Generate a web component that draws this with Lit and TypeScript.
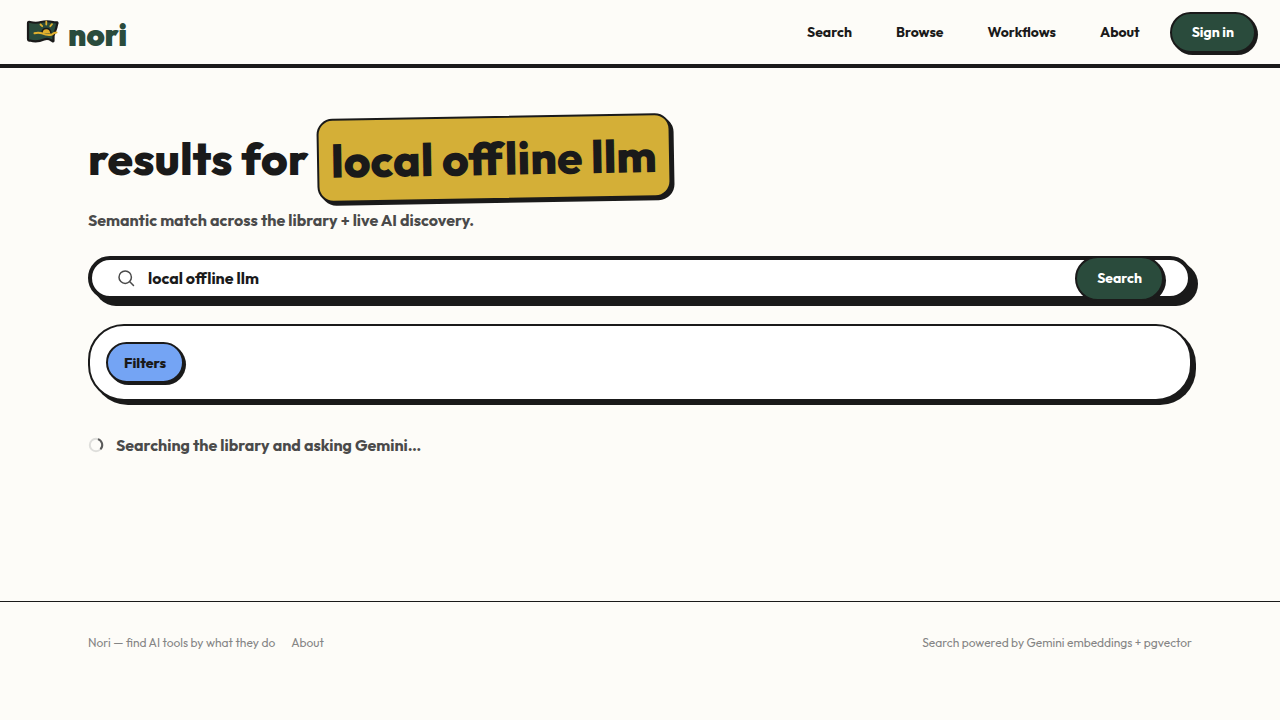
import { LitElement, html, css } from "lit";
import { customElement, state } from "lit/decorators.js";

@customElement("app-root")
export class AppRoot extends LitElement {
  static styles = css`
    :host {
      --ink: #1a1a1a;
      --paper: #fdfcf8;
      --green: #2a4b3c;
      --gold: #d4af37;
      --blue: #74a4f4;
      --muted: #4a4a4a;
      display: flex;
      flex-direction: column;
      min-height: 100vh;
      background: var(--paper);
      color: var(--ink);
      font-family: Outfit, Lato, "Open Sans", sans-serif;
      font-size: 16px;
      line-height: 24px;
    }
    *, *::before, *::after { box-sizing: border-box; }
    a { color: inherit; text-decoration: none; }
    .header {
      display: flex;
      align-items: center;
      justify-content: space-between;
      height: 68px;
      padding: 0 24px;
      border-bottom: 4px solid var(--ink);
    }
    .brand {
      display: flex;
      align-items: center;
      gap: 8px;
      color: var(--green);
      font-size: 31px;
      font-weight: 900;
      line-height: 40px;
    }
    .wordmark { padding-top: 6px; }
    .flag { width: 36px; height: 36px; }
    .nav { display: flex; align-items: center; gap: 16px; font-size: 14px; font-weight: 700; }
    .nav a { padding: 8px 14px; }
    .btn {
      height: 41px;
      padding: 0 20px;
      border: 2px solid var(--ink);
      border-radius: 24px;
      background: var(--green);
      box-shadow: 2px 2px 0 var(--ink);
      color: #fff;
      font: inherit;
      font-size: 14px;
      font-weight: 700;
      cursor: pointer;
    }
    .main {
      flex: 1;
      width: 100%;
      padding: 48px 88px;
    }
    h1 { margin: 0 0 8px; font-size: 46px; font-weight: 800; line-height: 60px; }
    .term {
      display: inline-block;
      padding: 10px 12px;
      border: 2px solid var(--ink);
      border-radius: 16px;
      background: var(--gold);
      box-shadow: 3px 3px 0 var(--ink);
      transform: rotate(-1deg);
    }
    .lead { margin: 0 0 24px; font-weight: 700; color: var(--muted); }
    .search {
      display: flex;
      align-items: center;
      gap: 12px;
      height: 44px;
      padding: 0 24px;
      border: 4px solid var(--ink);
      border-radius: 24px;
      background: #fff;
      box-shadow: 6px 6px 0 var(--ink);
    }
    .search-btn { height: 45px; }
    .glass { flex: none; width: 20px; height: 20px; color: var(--muted); }
    .field {
      flex: 1;
      min-width: 0;
      padding: 0;
      border: 0;
      outline: 0;
      background: none;
      color: inherit;
      font: inherit;
      font-weight: 700;
    }
    .filters {
      display: flex;
      margin-top: 24px;
      padding: 16px;
      border: 2px solid var(--ink);
      border-radius: 36px;
      background: #fff;
      box-shadow: 4px 4px 0 var(--ink);
    }
    .filter-btn { padding: 0 16px; background: var(--blue); color: var(--ink); font-weight: 800; }
    .status {
      display: flex;
      align-items: center;
      gap: 12px;
      margin-top: 32px;
      color: var(--muted);
      font-weight: 700;
    }
    .spinner { width: 16px; height: 16px; }
    .footer {
      display: flex;
      justify-content: space-between;
      height: 119px;
      padding: 32px 88px;
      border-top: 1px solid var(--ink);
      color: #858585;
      font-size: 12px;
      line-height: 18px;
    }
    .footer div { display: flex; gap: 16px; }
  `;

  @state() private query = "local offline llm";

  render() {
    return html`
      <header class="header">
        <a class="brand" href="#">
          <svg class="flag" viewBox="0 0 36 36" aria-hidden="true">
            <path d="M4 9Q4 7.700 6 8Q12 9.500 17 8Q23 6.500 29 8Q31 8.500 33 8.300Q34 8.800 33 10.500Q32.500 14 31 17.500Q29 21 29.500 27Q29 28 27.500 26.500Q24 24 20 25.500Q13 28.500 6 26.500Q4 27 4 25Z" fill="#2a4b3c" stroke="#1a1a1a" stroke-width="2.200" stroke-linejoin="round"/>
            <path d="M17.800 19.500Q18 14.500 22.300 14.500Q26.600 14.500 27 19.500" fill="#e0b02e" stroke="#1a1a1a" stroke-width="1.500"/>
            <path d="M10.500 19.300Q14 18 18 19.300Q24 22 28 20.500Q30 18.500 32.500 18.500" fill="none" stroke="#e0b02e" stroke-width="2" stroke-linecap="round"/>
            <path d="M16.500 10.500l1.700 1.700M22.300 7.500v3M28 10.200l-1.700 2" stroke="#e0b02e" stroke-width="1.800" stroke-linecap="round"/>
          </svg>
          <span class="wordmark">nori</span>
        </a>
        <nav class="nav">
          <a href="#search">Search</a>
          <a href="#browse">Browse</a>
          <a href="#workflows">Workflows</a>
          <a href="#about">About</a>
          <button class="btn" type="button">Sign in</button>
        </nav>
      </header>
      <main class="main">
        <h1>results for <span class="term">${this.query}</span></h1>
        <p class="lead">Semantic match across the library + live AI discovery.</p>
        <form class="search" @submit=${(e: Event) => e.preventDefault()}>
          <svg class="glass" viewBox="0 0 20 20" fill="none" stroke="currentColor" stroke-width="1.500" stroke-linecap="round" aria-hidden="true">
            <circle cx="9.200" cy="9.200" r="6.200"/><path d="M13.800 13.800L17.500 17.500"/>
          </svg>
          <input class="field" type="text" aria-label="Search tools" .value=${this.query}>
          <button class="btn search-btn" type="submit">Search</button>
        </form>
        <section class="filters" aria-label="Filters">
          <button class="btn filter-btn" type="button">Filters</button>
        </section>
        <div class="status" role="status">
          <svg class="spinner" viewBox="0 0 16 16" fill="none" stroke-width="2" aria-hidden="true">
            <circle cx="8" cy="8" r="6.200" stroke="#dededb"/>
            <path d="M10 2.100A6.200 6.200 0 0 1 12.400 12.400" stroke="#5a5a5a"/>
          </svg>
          <span>Searching the library and asking Gemini…</span>
        </div>
      </main>
      <footer class="footer">
        <div><span>Nori — find AI tools by what they do</span><a href="#about">About</a></div>
        <span>Search powered by Gemini embeddings + pgvector</span>
      </footer>
    `;
  }
}
